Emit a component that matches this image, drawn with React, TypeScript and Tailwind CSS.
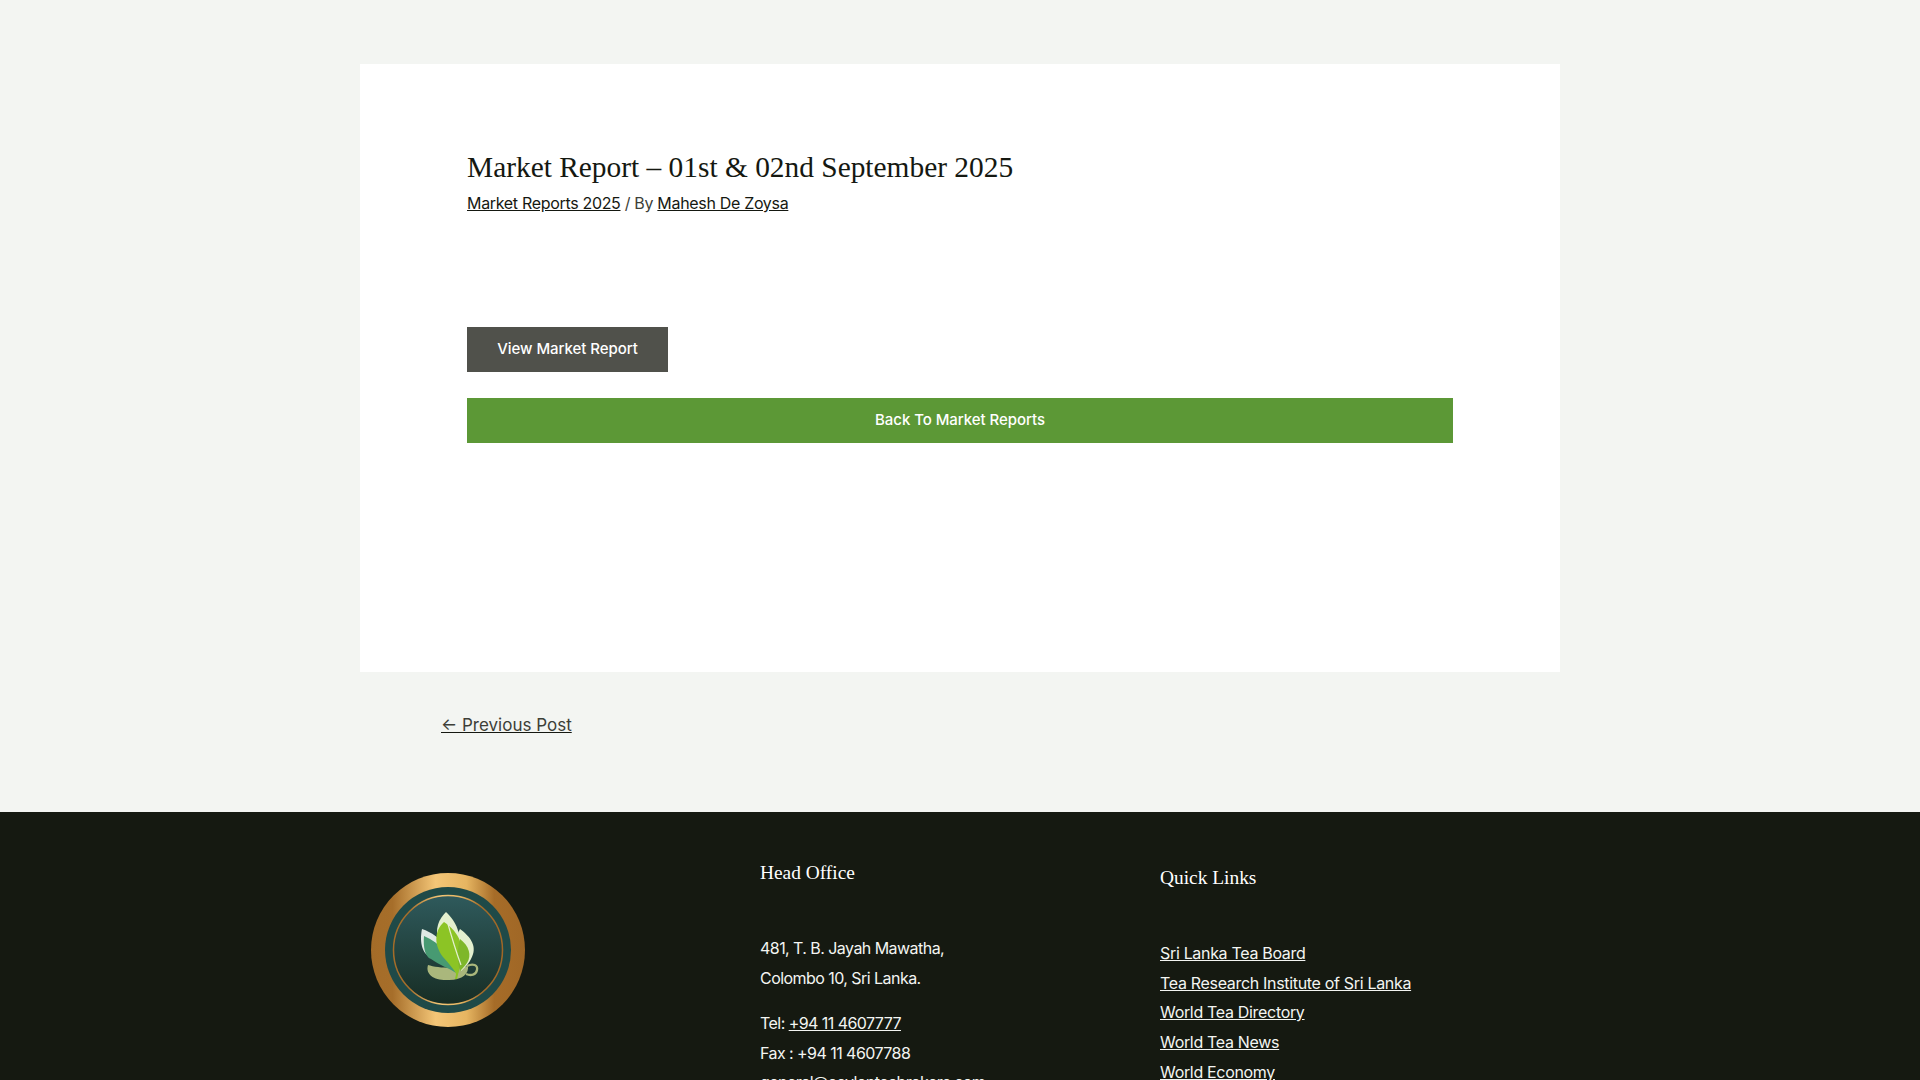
const body = { fontFamily: '"Inter", "Liberation Sans", sans-serif' };
const serif = { fontFamily: '"Liberation Serif", serif' };

function Logo() {
  return (
    <svg viewBox="0 0 154 154" className="w-[154px] h-[154px]">
      <defs>
        <linearGradient id="ring" x1="0" x2="1" y1="0" y2="0">
          <stop offset="0" stopColor="#a46c28" />
          <stop offset="0.14" stopColor="#a66e2a" />
          <stop offset="0.42" stopColor="#f4c677" />
          <stop offset="0.62" stopColor="#e6b561" />
          <stop offset="0.8" stopColor="#a66c28" />
          <stop offset="1" stopColor="#a06726" />
        </linearGradient>
        <linearGradient id="disc" x1="0" x2="0" y1="0" y2="1">
          <stop offset="0" stopColor="#2f5a5c" />
          <stop offset="1" stopColor="#172d24" />
        </linearGradient>
      </defs>
      <circle cx="77" cy="77" r="77" fill="url(#ring)" />
      <circle cx="77" cy="77" r="63" fill="#1f4a48" />
      <circle cx="77" cy="77" r="54.5" fill="url(#disc)" stroke="url(#ring)" strokeWidth="1.5" />
      <path d="M57 92 C66 95 86 96 97 93 C98 100 92 107 78 107 C64 108 54 102 57 92 Z" fill="#aab77c" />
      <path d="M96 93 C102 90 107 92 106 97 C105 102 100 103 95 101" fill="none" stroke="#aab77c" strokeWidth="2.3" />
      <path d="M51 56 C48 70 52 82 60 84 C72 78 80 90 86 100 C86 82 70 62 51 56 Z" fill="#dfe9e4" />
      <path d="M53 63 C52 74 54 84 60 86 C68 92 78 95 85 100 C80 84 70 70 53 63 Z" fill="#479a72" />
      <path d="M89 56 C100 64 107 74 100 86 C97 92 92 96 90 98 C84 82 82 68 89 56 Z" fill="#e4f0cf" />
      <path d="M75 39 C68 46 63 56 68 68 L86 72 C92 64 85 48 75 39 Z" fill="#e4f0cf" />
      <path d="M73 49 C63 58 63 72 72 84 C78 91 84 97 86 103 C92 88 92 70 86 62 C82 56 78 52 73 49 Z" fill="#8cc425" />
      <path d="M89 66 C98 73 101 82 96 90 C93 94 91 96 89 98 C86 88 86 76 89 66 Z" fill="#7eb72a" />
      <path d="M75 44 C80 62 84 76 90 92" fill="none" stroke="#e4f0cf" strokeWidth="1.2" />
      <path d="M87 97 L85 106" fill="none" stroke="#8cc425" strokeWidth="2" />
    </svg>
  );
}

function ActionButton({ label, wide }: { label: string; wide?: boolean }) {
  return wide ? (
    <a className="flex h-[45px] w-full items-center justify-center bg-[#5c9836] text-[15px] font-medium tracking-[-0.05px] text-white">{label}</a>
  ) : (
    <a className="flex h-[45px] w-[201px] items-center justify-center bg-[#50514b] text-[15px] font-medium tracking-[-0.05px] text-white">{label}</a>
  );
}

const links = ['Sri Lanka Tea Board', 'Tea Research Institute of Sri Lanka', 'World Tea Directory', 'World Tea News', 'World Economy'];

export default function App() {
  return (
    <div style={body} className="h-[1080px] overflow-hidden bg-[#f3f5f2]">
      <main className="mx-auto w-[1200px] pt-[64px]">
        <article className="h-[608px] bg-white px-[107px] pt-[84px]">
          <h1 style={serif} className="text-[29.4px] leading-[38px] text-[#151811]">
            Market Report – 01st &amp; 02nd September 2025
          </h1>
          <p className="mt-[5px] text-[16px] leading-[24px] tracking-[-0.32px] text-[#3d3f38]">
            <a className="text-[#151811] underline">Market Reports 2025</a> / By{' '}
            <a className="text-[#151811] underline">Mahesh De Zoysa</a>
          </p>
          <div className="mt-[112px] flex flex-col gap-[26px]">
            <ActionButton label="View Market Report" />
            <ActionButton label="Back To Market Reports" wide />
          </div>
        </article>
        <nav className="flex h-[140px] items-start px-[81px] pt-[40px]">
          <a className="text-[17px] leading-[26px] text-[#3d3f38] underline decoration-[#151811]">← Previous Post</a>
        </nav>
      </main>
      <footer className="h-[268px] bg-[#151911] text-[16px] text-[#f3f5f2]">
        <div className="mx-auto flex w-[1200px]">
          <div className="w-[400px] pl-[11px] pt-[61px]">
            <Logo />
          </div>
          <div className="w-[400px] pt-[47px]">
            <h2 style={serif} className="text-[19.4px] leading-[28px] text-white">Head Office</h2>
            <p className="mt-[47px] leading-[29.6px] tracking-[-0.55px]">481, T. B. Jayah Mawatha,<br />Colombo 10, Sri Lanka.</p>
            <p className="mt-[16px] leading-[29.6px] tracking-[-0.55px]">
              Tel: <a className="underline">+94 11 4607777</a><br />
              Fax : +94 11 4607788<br />
              <a className="underline">general@ceylonteabrokers.com</a>
            </p>
          </div>
          <div className="pt-[52px]">
            <h2 style={serif} className="text-[19.4px] leading-[28px] text-white">Quick Links</h2>
            <ul className="mt-[47px] flex flex-col">
              {links.map((l) => (
                <li key={l} className="leading-[29.7px] tracking-[-0.32px]"><a className="underline">{l}</a></li>
              ))}
            </ul>
          </div>
        </div>
      </footer>
    </div>
  );
}
